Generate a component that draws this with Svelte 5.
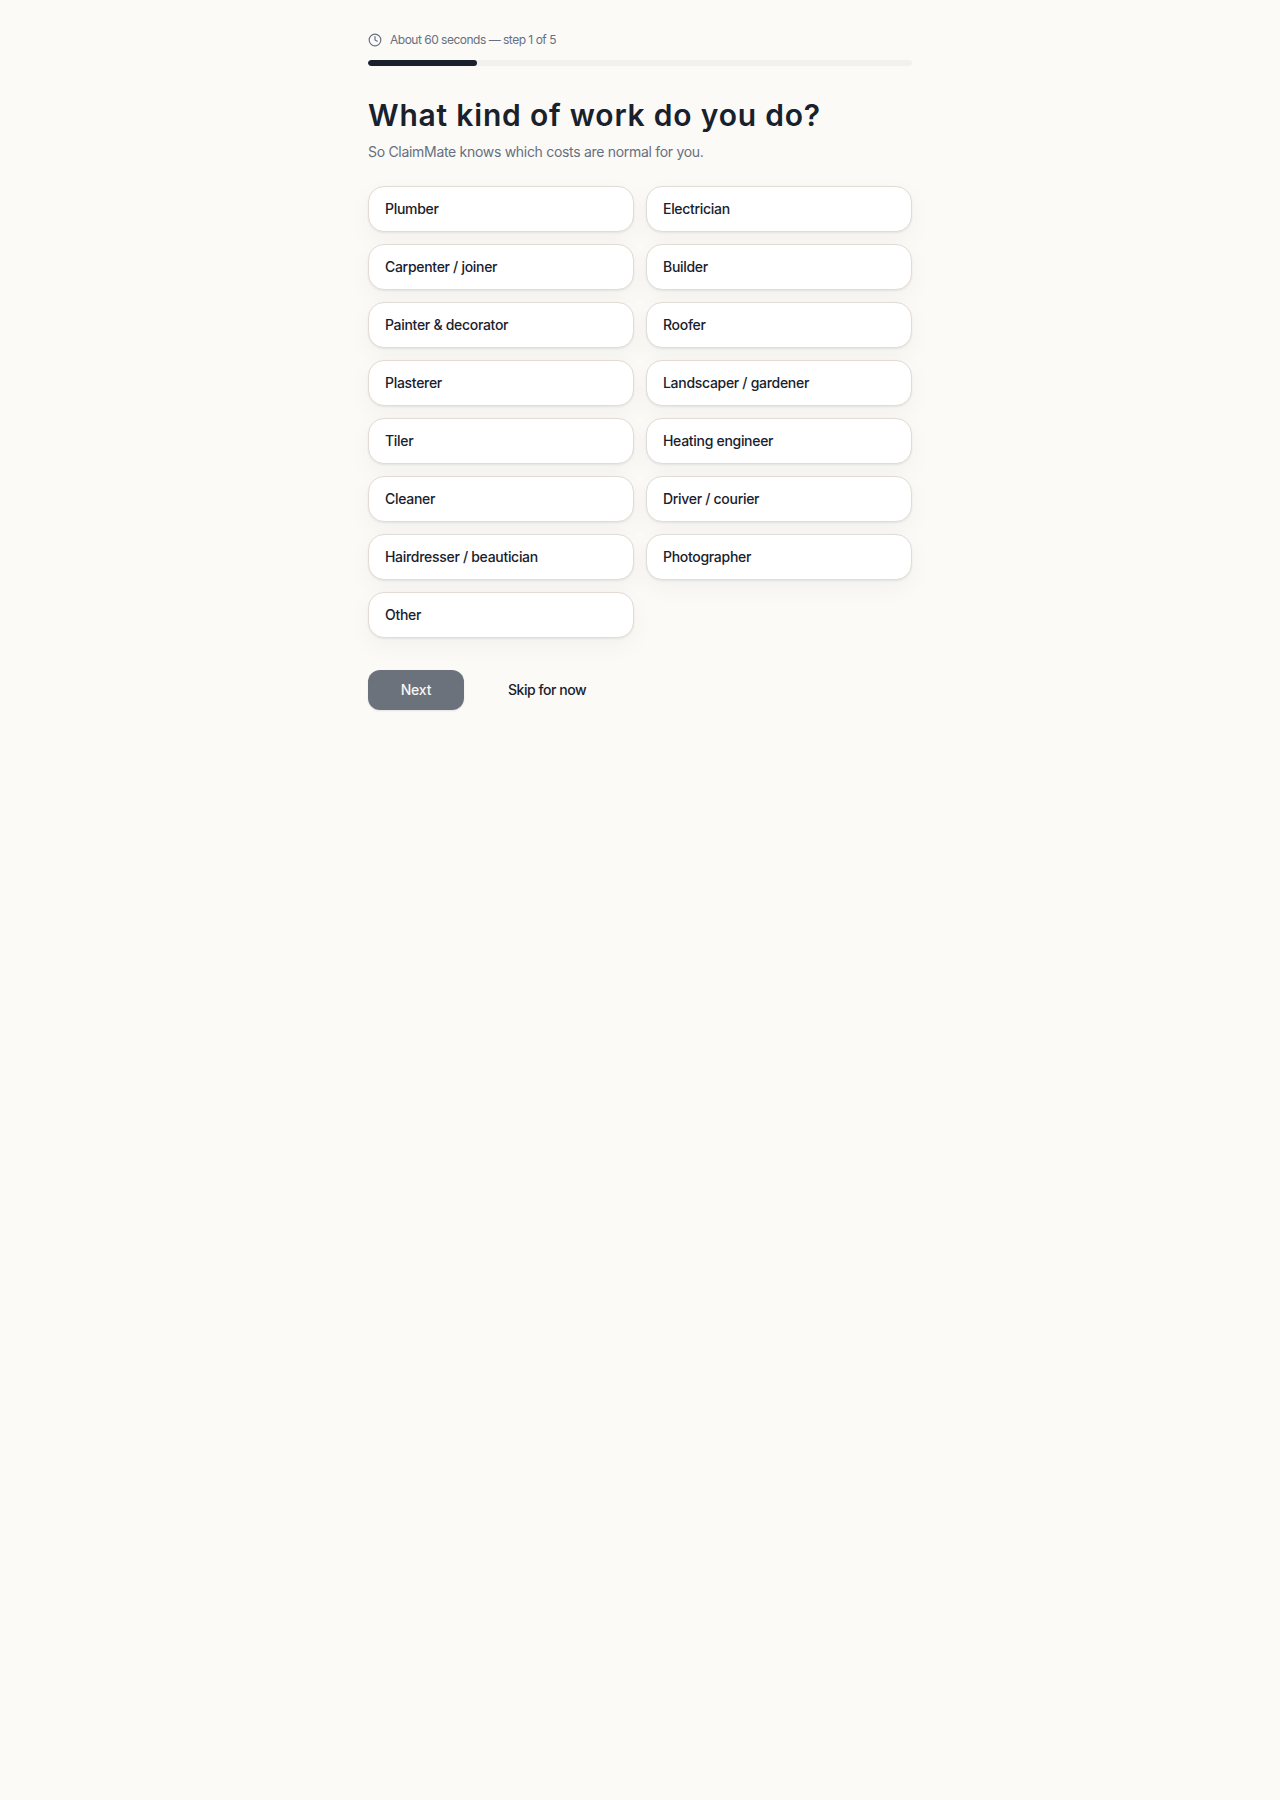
<script>
    const trades = [
        'Plumber',
        'Electrician',
        'Carpenter / joiner',
        'Builder',
        'Painter & decorator',
        'Roofer',
        'Plasterer',
        'Landscaper / gardener',
        'Tiler',
        'Heating engineer',
        'Cleaner',
        'Driver / courier',
        'Hairdresser / beautician',
        'Photographer',
        'Other'
    ];
</script>

<main class="page">
    <div class="eta">
        <svg class="clock" viewBox="0 0 24 24" width="14" height="14" fill="none" stroke="currentColor" stroke-width="2" stroke-linecap="round" stroke-linejoin="round">
            <circle cx="12" cy="12" r="10" />
            <path d="M12 6v6l4 2" />
        </svg>
        <span class="eta-text">About 60 seconds — step 1 of 5</span>
    </div>

    <div class="track"><div class="fill"></div></div>

    <h1>What kind of work do you do?</h1>
    <p class="sub">So ClaimMate knows which costs are normal for you.</p>

    <div class="options">
        {#each trades as trade}
            <button class="option">{trade}</button>
        {/each}
    </div>

    <div class="actions">
        <button class="next">Next</button>
        <button class="skip">Skip for now</button>
    </div>
</main>

<style>
    :global(body) {
        background: #fbfaf6;
        min-height: 1800px;
    }

    .page {
        box-sizing: border-box;
        width: 576px;
        margin: 0 auto;
        padding: 32px 16px;
        font-family: Inter, "Liberation Sans", sans-serif;
        color: #18212c;
    }

    .eta {
        display: flex;
        align-items: center;
        gap: 8px;
        height: 16px;
        font-size: 12px;
        letter-spacing: -0.5px;
        color: #667080;
    }

    .eta-text {
        margin-top: -1px;
    }

    .clock {
        flex-shrink: 0;
    }

    .track {
        height: 6px;
        margin-top: 12px;
        border-radius: 99px;
        background: #f2f1ed;
        overflow: hidden;
    }

    .fill {
        width: 20%;
        height: 100%;
        border-radius: 99px;
        background: #18212c;
    }

    h1 {
        margin: 31px 0 0;
        font-size: 30px;
        line-height: 36px;
        font-weight: 600;
        letter-spacing: 0.8px;
        color: #18212c;
    }

    .sub {
        margin: 9px 0 0;
        font-size: 14px;
        line-height: 20px;
        letter-spacing: -0.3px;
        color: #667080;
    }

    .options {
        display: grid;
        grid-template-columns: 1fr 1fr;
        gap: 12px;
        margin-top: 24px;
    }

    .option {
        height: 46px;
        padding: 0 16px 2px;
        text-align: left;
        font: 500 14px Inter, "Liberation Sans", sans-serif;
        letter-spacing: -0.3px;
        color: #18212c;
        background: #fff;
        border: 1px solid #e3dcd4;
        border-radius: 16px;
        box-shadow: 0 1px 2px rgba(24, 33, 44, 0.08), 0 8px 24px rgba(24, 33, 44, 0.04);
    }

    .actions {
        display: flex;
        align-items: center;
        gap: 12px;
        margin-top: 32px;
    }

    .next {
        width: 96px;
        height: 40px;
        padding: 0 0 2px;
        border: 0;
        border-radius: 12px;
        background: #6b727b;
        color: #f6f6f4;
        font: 500 14px Inter, "Liberation Sans", sans-serif;
        letter-spacing: -0.2px;
        box-shadow: 0 1px 2px rgba(24, 33, 44, 0.1);
    }

    .skip {
        height: 40px;
        padding: 0 32px 2px;
        border: 0;
        background: none;
        color: #18212c;
        font: 500 14px Inter, "Liberation Sans", sans-serif;
        letter-spacing: -0.45px;
    }
</style>
